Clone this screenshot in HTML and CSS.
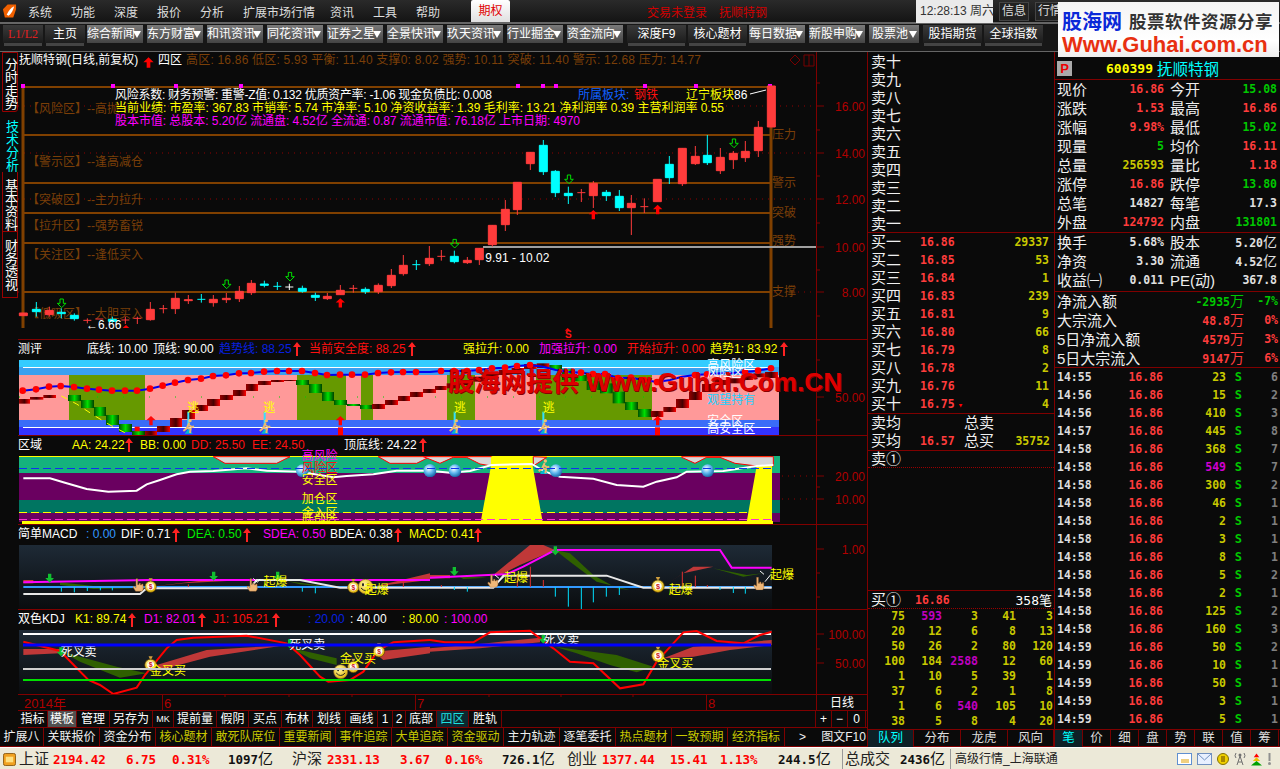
FILE: index.html
```html
<!DOCTYPE html>
<html lang="zh-CN">
<head>
<meta charset="utf-8">
<title>行情</title>
<link rel="stylesheet" href="styles.css">
</head>
<body>
<div class="app">
  <header class="menu">
    <svg class="logo" viewBox="0 0 16 16" width="15" height="16"><path fill="#f06000" d="M1 6 6 1h9v5l-3 9H3z"/><path fill="#fff" d="M5 12C7 8 9 5 13 3 12 7 10 11 7 13z"/></svg>
    <nav class="menu-items"><span>系统</span><span>功能</span><span>深度</span><span>报价</span><span>分析</span><span class="wide">扩展市场行情</span><span>资讯</span><span>工具</span><span>帮助</span></nav>
    <div class="qq">期权</div>
    <div class="login"><span>交易未登录</span><span>抚顺特钢</span></div>
    <div class="clock">12:28:13 周六</div>
    <div class="mbtn">信息</div>
    <div class="mbtn">行情</div>
  </header>
  <div class="toolbar">
    <div class="tb dark sm red">L1/L2</div><div class="tb dark sm">主页</div>
    <div class="tb gray">综合新闻<i></i></div><div class="tb gray">东方财富<i></i></div><div class="tb gray">和讯资讯<i></i></div><div class="tb gray">同花资讯<i></i></div><div class="tb gray">证券之星<i></i></div><div class="tb gray">全景快讯<i></i></div><div class="tb gray">玖天资讯<i></i></div><div class="tb gray">行业掘金<i></i></div><div class="tb gray">资金流向<i></i></div>
    <div class="tb dark">深度F9</div><div class="tb dark">核心题材</div>
    <div class="tb gray">每日数据<i></i></div><div class="tb gray">新股申购<i></i></div><div class="tb gray short">股票池<i></i></div>
    <div class="tb dark">股指期货</div><div class="tb dark">全球指数</div>
  </div>
  <main class="body">
    <div class="leftblock">
      <div class="toprow">
        <aside class="side">
          <div class="stab t1">分时走势</div><div class="stab t2">技术分析</div><div class="stab t3">基本资料</div><div class="stab t3 t4">财务透视</div>
        </aside>
        <section class="center">
          <!-- main chart -->
          <div class="pane">
            <svg class="chart" width="849" height="287" viewBox="18 52 849 287">
              <defs>
                <symbol id="ga" viewBox="0 0 30 30"><path d="M10 2h10v13h8L15 28 2 15h8z" fill="none" stroke="#00e000" stroke-width="3"/></symbol>
                <symbol id="ra" viewBox="0 0 30 30"><path d="M15 1 29 14H20V29H10V14H1z" fill="#f00"/></symbol>
                <symbol id="gd" viewBox="0 0 30 30"><path d="M10 1h10v13h8L15 28 2 14h8z" fill="#10c030"/></symbol>
                <symbol id="ua" viewBox="0 0 8 14"><path d="M4 0 0 5h3v9h2V5h3z" fill="#f22"/></symbol>
                <radialGradient id="ballg" cx=".4" cy=".35" r=".7"><stop offset="0" stop-color="#fff"/><stop offset=".5" stop-color="#60b8f0"/><stop offset="1" stop-color="#1060a0"/></radialGradient>
                <radialGradient id="yel" cx=".4" cy=".35" r=".7"><stop offset="0" stop-color="#fff8a0"/><stop offset="1" stop-color="#e0b000"/></radialGradient>
                <symbol id="ball" viewBox="0 0 40 40"><circle cx="20" cy="20" r="19" fill="url(#ballg)"/></symbol>
                <symbol id="bag" viewBox="0 0 40 44"><path d="M14 1h12l-4 8h-4z" fill="#d0a040"/><circle cx="20" cy="26" r="17" fill="url(#yel)" stroke="#604000" stroke-width="2"/><circle cx="20" cy="26" r="10" fill="#fff"/><text class="bagt" x="20" y="33" text-anchor="middle">$</text></symbol>
                <symbol id="smile" viewBox="0 0 48 48"><circle cx="24" cy="24" r="22" fill="url(#yel)" stroke="#806030" stroke-width="2"/><ellipse cx="16" cy="18" rx="3" ry="5" fill="#222"/><ellipse cx="32" cy="18" rx="3" ry="5" fill="#222"/><path d="M10 28Q24 44 38 28" fill="none" stroke="#222" stroke-width="3"/></symbol>
                <symbol id="hand" viewBox="0 0 36 40"><path d="M12 1h5v18h4v-4h4v5h4v-3h4l1 15-4 7H11L3 26l3-3 6 5z" fill="#f0b878" stroke="#a06830" stroke-width="1.5"/></symbol>
                <symbol id="run" viewBox="0 0 40 48"><path d="M8 46 20 30 32 46z" fill="#00b8d8"/><circle cx="24" cy="7" r="5" fill="#f0c070"/><path d="M22 13 14 30 4 38M20 20 30 26 36 24M15 28 26 32 24 44" fill="none" stroke="#e8b870" stroke-width="6"/></symbol>
                <linearGradient id="rb"><stop offset="0" stop-color="#900"/><stop offset=".5" stop-color="#400"/><stop offset="1" stop-color="#f00"/></linearGradient>
                <linearGradient id="gb"><stop offset="0" stop-color="#005000"/><stop offset=".5" stop-color="#00e000"/><stop offset="1" stop-color="#004000"/></linearGradient>
                <linearGradient id="darkb" x1="0" y1="0" x2="0" y2="1"><stop offset="0" stop-color="#1e2a36"/><stop offset="1" stop-color="#0a0c0e"/></linearGradient>
              </defs>
              <text class="w" x="19" y="64">抚顺特钢(日线,前复权)</text>
              <use href="#ra" x="143" y="56" width="11" height="13"/>
              <text class="w" x="158" y="64">四区</text>
              <text class="brn" x="186" y="64" textLength="515">高区: 16.86 低区: 5.93 平衡: 11.40 支撑0: 8.02 强势: 10.11 突破: 11.40 警示: 12.68 压力: 14.77</text>
              <path d="M795 55l5 5-5 5-5-5zM804 55h10v11h-10zM809 55v11" fill="none" stroke="#700"/>
              <path class="dots" d="M18 106H816M18 153H816M18 199H816M18 292H816"/>
              <path class="brline" d="M23 87H771M23 135H771M23 183H771M23 213H771M23 243H771M23 292H771"/>
              <path class="brwide" d="M23 87V328M771 87V328"/>
              <g fill="#f0f" ><rect x="21" y="84" width="4" height="4"/><rect x="111" y="84" width="4" height="4"/><rect x="174" y="84" width="4" height="4"/><rect x="239" y="84" width="4" height="4"/><rect x="516" y="84" width="4" height="4"/><rect x="541" y="84" width="4" height="4"/><rect x="554" y="84" width="4" height="4"/><rect x="643" y="84" width="4" height="4"/><rect x="694" y="84" width="4" height="4"/><rect x="768" y="84" width="4" height="4"/></g>
              <g class="brn">
                <text x="27" y="113">【风险区】--高抛</text>
                <text x="27" y="166">【警示区】--逢高减仓</text>
                <text x="27" y="204">【突破区】--主力拉升</text>
                <text x="27" y="230">【拉升区】--强势畜锐</text>
                <text x="27" y="259">【关注区】--逢低买入</text>
                <text x="27" y="318">【低吸区】--大胆买入</text>
                <text x="772" y="139">压力</text><text x="772" y="187">警示</text><text x="772" y="217">突破</text><text x="772" y="245">强势</text><text x="772" y="296">支撑</text>
              </g>
              <path d="M483 247H816" stroke="#a0a0a0" stroke-width="2"/>
              <g transform="translate(0 130) scale(.33333)">
                <path class="cr" d="M58 549h24v8h-24zM136 541h24v13h-24zM148 530V560M250 571h24M262 565V580M286 567h24M364 570h24M376 560V582M400 565h24M412 560V582M439 538h24v31h-24zM451 516V572M478 536h24M490 525V550M514 505h24v31h-24zM526 488V552M553 509h24v3h-24zM565 495V522M628 508h24v10h-24zM640 495V530M667 505h24v4h-24zM679 489V519M706 484h24v22h-24zM718 468V516M742 460h24v28h-24zM754 450V495M970 499h24v7h-24zM982 489V510M1009 481h24v13h-24zM1021 465V495M1048 475h24M1060 465V488M1123 466h24v19h-24zM1135 460V492M1162 436h24v31h-24zM1174 417V474M1198 406h24v25h-24zM1210 375V437M1276 385h24v16h-24zM1288 348V408"/>
                <path class="cc" d="M97 538h24v7h-24zM109 516V560M172 547h24v4h-24zM184 535V565M211 556h24v10h-24zM223 550V572M325 568h24v6h-24zM337 560V578M592 508h24M604 492V518M781 462h24v4h-24zM793 452V472M820 469h24M832 456V480M895 475h24v9h-24zM907 467V488M934 496h24v6h-24zM946 488V513M1084 478h24v7h-24zM1096 472V492M1237 404h24M1249 390V420"/>
                <path class="cw" d="M856 471h24M868 461V480"/>
                <use href="#ga" x="170" y="504" width="30" height="32"/><use href="#ga" x="665" y="447" width="30" height="32"/><use href="#ga" x="855" y="424" width="30" height="32"/>
                <use href="#ra" x="1006" y="503" width="30" height="31"/>
                <path d="M368 594 378 585 388 594z" fill="#f00"/>
                <text class="zt w" x="258" y="596">←6.66</text>
              </g>
              <g transform="translate(430 130) scale(.33333)">
                <path class="cr" d="M22 379h24M34 360V392M100 391h24v7h-24zM112 381V402M136 355h24v34h-24zM148 354V405M175 286h24v58h-24zM187 285V350M214 238h24v46h-24zM226 210V303M250 157h24v82h-24zM262 156V255M289 67h24v34h-24zM301 66V120M442 188h24M454 177V216M478 160h24v37h-24zM490 153V234M592 220h24v13h-24zM604 195V315M631 230h24M643 205V249M670 148h24v67h-24zM745 55h24v106h-24zM757 54V168M784 79h24v22h-24zM796 48V105M859 82h24v40h-24zM871 54V132M898 70h24v19h-24zM910 63V117M934 64h24v19h-24zM946 33V96M973 -8h24v70h-24zM985 -27V81M1012 -132h24v123h-24z"/>
                <path class="cc" d="M61 379h24v16h-24zM73 362V400M328 46h24v79h-24zM340 30V135M364 124h24v64h-24zM376 120V201M403 190h24v7h-24zM415 170V222M517 187h24v10h-24zM529 180V213M556 199h24v34h-24zM568 180V243M706 103h24v40h-24zM718 78V162M820 76h24v22h-24zM832 15V105"/>
                <use href="#ga" x="59" y="325" width="30" height="32"/><use href="#ga" x="402" y="132" width="30" height="32"/><use href="#ga" x="897" y="24" width="30" height="32"/>
                <use href="#ra" x="475" y="238" width="30" height="32"/><use href="#ra" x="668" y="222" width="30" height="33"/>
                <path d="M404 602 413 594 422 602z" fill="#f00"/>
                <text class="zt r s-mark" x="405" y="624">S</text>
                <text class="zt w" x="166" y="396">9.91 - 10.02</text>
              </g>
              <text class="w" x="115" y="99" textLength="377">风险系数: 财务预警: 重警-Z值: 0.132 优质资产率: -1.06 现金负债比: 0.008</text>
              <text class="y" x="115" y="112" textLength="609">当前业绩: 市盈率: 367.83 市销率: 5.74 市净率: 5.10 净资收益率: 1.39 毛利率: 13.21 净利润率 0.39 主营利润率 0.55</text>
              <text class="m" x="115" y="125" textLength="465">股本市值: 总股本: 5.20亿 流通盘: 4.52亿 全流通: 0.87 流通市值: 76.18亿 上市日期: 4970</text>
              <text class="bl2" x="578" y="99">所属板块:</text><text class="r" x="634" y="99">钢铁</text><text class="y" x="686" y="99">辽宁板块</text><text class="w" x="734" y="99">86</text>
              <path d="M750 94 766 90" stroke="#fff"/>
              <path class="red-line" d="M816.5 52V339"/>
              <path class="red-line" d="M816 106h8M816 153h8M816 199h8M816 247h8M816 292h8M816 83h4M816 130h4M816 176h4M816 223h4M816 270h4M816 316h4"/>
              <g class="ax"><text x="865" y="111">16.00</text><text x="865" y="158">14.00</text><text x="865" y="204">12.00</text><text x="865" y="252">10.00</text><text x="865" y="297">8.00</text></g>
            </svg>
          </div>
          <!-- 测评 -->
          <div class="pane">
            <svg class="chart" width="849" height="95" viewBox="18 340 849 95">
              <text class="w" x="18" y="353">测评</text>
              <text class="w" x="87" y="353">底线: 10.00</text><text class="w" x="153" y="353">顶线: 90.00</text>
              <text class="bl" x="219" y="353">趋势线: 88.25</text><use href="#ua" x="293" y="342" width="8" height="14"/>
              <text class="r" x="309" y="353">当前安全度: 88.25</text><use href="#ua" x="408" y="342" width="8" height="14"/>
              <text class="y" x="463" y="353">强拉升: 0.00</text><text class="m" x="539" y="353">加强拉升: 0.00</text><text class="r" x="627" y="353">开始拉升: 0.00</text><text class="y" x="710" y="353">趋势1: 83.92</text><use href="#ua" x="780" y="342" width="8" height="14"/>
              <rect x="19" y="360" width="760" height="7" fill="#33ccff"/><rect x="19" y="367" width="760" height="8" fill="#3aa0f0"/>
              <rect x="19" y="375" width="760" height="45" fill="#ff9999"/><rect x="19" y="420" width="760" height="7" fill="#3a6cf8"/><rect x="19" y="427" width="760" height="9" fill="#3333ff"/>
              <g fill="#669900"><rect x="69" y="375" width="76" height="45"/><rect x="297" y="375" width="49" height="45"/><rect x="361" y="375" width="12" height="45"/><rect x="447" y="375" width="28" height="45"/><rect x="536" y="375" width="116" height="45"/></g>
              <path d="M23 367.5H771M23 427.5H771" stroke="#fff"/>
              <path d="M19 397H660" stroke="#00d000" stroke-dasharray="1 25"/>
              <g transform="translate(0 340) scale(.33333)">
                <g fill="url(#rb)"><rect x="57" y="177" width="33" height="14"/><rect x="90" y="171" width="40" height="8"/><rect x="130" y="165" width="38" height="9"/><rect x="435" y="273" width="36" height="15"/><rect x="471" y="258" width="39" height="18"/><rect x="510" y="234" width="36" height="27"/><rect x="546" y="210" width="39" height="27"/><rect x="585" y="195" width="39" height="18"/><rect x="621" y="177" width="39" height="21"/><rect x="660" y="165" width="39" height="15"/><rect x="699" y="150" width="39" height="18"/><rect x="738" y="132" width="36" height="21"/><rect x="774" y="123" width="39" height="12"/><rect x="813" y="120" width="39" height="6"/><rect x="852" y="120" width="39" height="3"/><rect x="1116" y="192" width="39" height="15"/><rect x="1155" y="180" width="39" height="15"/><rect x="1194" y="168" width="36" height="15"/><rect x="1230" y="156" width="39" height="15"/><rect x="1269" y="147" width="39" height="12"/></g>
                <g fill="url(#gb)"><rect x="204" y="165" width="39" height="18"/><rect x="243" y="180" width="39" height="24"/><rect x="282" y="201" width="36" height="27"/><rect x="318" y="225" width="39" height="30"/><rect x="357" y="252" width="39" height="24"/><rect x="396" y="273" width="39" height="15"/><rect x="888" y="120" width="39" height="15"/><rect x="927" y="132" width="39" height="27"/><rect x="966" y="156" width="36" height="27"/><rect x="1002" y="180" width="39" height="15"/><rect x="1041" y="192" width="39" height="6"/><rect x="1080" y="195" width="36" height="12"/></g>
                <path d="M184 168 230 192 280 225 330 255 388 285" fill="none" stroke="#ff0" stroke-width="3" stroke-dasharray="20 20"/>
                <polyline fill="none" stroke="#0000f0" stroke-width="6" points="68,152 108,148 147,140 182,138 222,141 261,146 297,149 336,152 375,152 411,152 450,146 488,137 525,128 564,120 603,116 639,108 678,106 717,100 753,99 792,95 831,93 867,93 906,93 945,99 981,105 1020,104 1056,104 1095,104 1134,99 1173,97 1209,96 1248,96 1290,96"/>
                <g fill="#f00"><circle cx="68" cy="152" r="10"/><circle cx="108" cy="148" r="10"/><circle cx="147" cy="140" r="10"/><circle cx="182" cy="138" r="10"/><circle cx="222" cy="141" r="10"/><circle cx="261" cy="146" r="10"/><circle cx="297" cy="149" r="10"/><circle cx="336" cy="152" r="10"/><circle cx="375" cy="152" r="10"/><circle cx="411" cy="152" r="10"/><circle cx="450" cy="146" r="10"/><circle cx="488" cy="137" r="10"/><circle cx="525" cy="128" r="10"/><circle cx="564" cy="120" r="10"/><circle cx="603" cy="116" r="10"/><circle cx="639" cy="108" r="10"/><circle cx="678" cy="106" r="10"/><circle cx="717" cy="100" r="10"/><circle cx="753" cy="99" r="10"/><circle cx="792" cy="95" r="10"/><circle cx="831" cy="93" r="10"/><circle cx="867" cy="93" r="10"/><circle cx="906" cy="93" r="10"/><circle cx="945" cy="99" r="10"/><circle cx="981" cy="105" r="10"/><circle cx="1020" cy="104" r="10"/><circle cx="1056" cy="104" r="10"/><circle cx="1095" cy="104" r="10"/><circle cx="1134" cy="99" r="10"/><circle cx="1173" cy="97" r="10"/><circle cx="1209" cy="96" r="10"/><circle cx="1248" cy="96" r="10"/></g>
                <use href="#ra" x="438" y="224" width="30" height="36" opacity=".95"/><use href="#ra" x="1006" y="224" width="30" height="36"/>
                <rect x="1014" y="262" width="15" height="26" fill="#f00"/><rect x="404" y="260" width="15" height="14" fill="#f00"/>
                <rect x="562" y="215" width="6" height="40" fill="#33e0ff"/><rect x="791" y="215" width="6" height="40" fill="#33e0ff"/>
                <use href="#run" x="546" y="234" width="40" height="50"/><use href="#run" x="775" y="234" width="40" height="50"/>
                <text class="zt y" x="562" y="216">逃</text><text class="zt y" x="790" y="216">逃</text>
              </g>
              <g transform="translate(430 340) scale(.33333)">
                <g fill="url(#rb)"><rect x="15" y="138" width="35" height="12"/><rect x="50" y="130" width="40" height="15"/><rect x="90" y="120" width="40" height="15"/><rect x="130" y="110" width="38" height="15"/><rect x="168" y="100" width="38" height="15"/><rect x="206" y="90" width="39" height="15"/><rect x="245" y="84" width="37" height="16"/><rect x="282" y="72" width="38" height="15"/><rect x="320" y="70" width="38" height="14"/><rect x="663" y="213" width="37" height="18"/><rect x="700" y="201" width="38" height="15"/><rect x="738" y="177" width="39" height="27"/><rect x="777" y="156" width="39" height="24"/><rect x="816" y="132" width="39" height="24"/><rect x="855" y="120" width="40" height="15"/><rect x="895" y="115" width="40" height="15"/><rect x="935" y="105" width="35" height="15"/><rect x="970" y="100" width="35" height="12"/><rect x="1005" y="96" width="39" height="18"/></g>
                <g fill="url(#gb)"><rect x="358" y="75" width="38" height="15"/><rect x="396" y="88" width="39" height="32"/><rect x="435" y="105" width="35" height="18"/><rect x="470" y="123" width="40" height="27"/><rect x="510" y="130" width="38" height="30"/><rect x="548" y="155" width="37" height="35"/><rect x="585" y="186" width="39" height="24"/><rect x="624" y="207" width="39" height="24"/></g>
                <polyline fill="none" stroke="#0000f0" stroke-width="6" points="0,96 33,93 72,93 111,93 147,90 186,85 225,83 261,78 300,75 339,80 378,90 414,95 453,98 489,102 525,102 564,114 603,113 642,120 681,126 720,120 756,110 795,105 831,103 870,100 906,99 945,96 984,92 1023,85"/>
                <g fill="#f00"><circle cx="33" cy="93" r="10"/><circle cx="72" cy="93" r="10"/><circle cx="111" cy="93" r="10"/><circle cx="147" cy="90" r="10"/><circle cx="186" cy="85" r="10"/><circle cx="225" cy="83" r="10"/><circle cx="261" cy="78" r="10"/><circle cx="300" cy="75" r="10"/><circle cx="453" cy="98" r="10"/><circle cx="489" cy="102" r="10"/><circle cx="525" cy="102" r="10"/><circle cx="564" cy="114" r="10"/><circle cx="603" cy="113" r="10"/><circle cx="642" cy="120" r="10"/><circle cx="681" cy="126" r="10"/><circle cx="795" cy="105" r="10"/><circle cx="831" cy="103" r="10"/><circle cx="945" cy="96" r="10"/><circle cx="984" cy="92" r="10"/><circle cx="1023" cy="85" r="10"/></g>
                <use href="#ra" x="668" y="224" width="30" height="36"/><rect x="675" y="262" width="15" height="26" fill="#f00"/>
                <rect x="71" y="215" width="6" height="40" fill="#33e0ff"/><rect x="337" y="215" width="6" height="40" fill="#33e0ff"/>
                <use href="#run" x="55" y="234" width="40" height="50"/><use href="#run" x="322" y="234" width="40" height="50"/>
                <text class="zt y" x="72" y="216">逃</text><text class="zt y" x="338" y="216">逃</text>
                <text class="zt w" x="832" y="88">高风险区</text><text class="zt w" x="832" y="112">风险区</text><text class="zt cy" x="832" y="192">观望持有</text><text class="zt w" x="832" y="256">安全区</text><text class="zt w" x="832" y="278">高安全区</text>
              </g>
              <path class="red-line" d="M816.5 340V435M816 397h8M816 360h4M816 420h4"/>
              <g class="ax"><text x="865" y="402">50.00</text></g>
            </svg>
          </div>
          <!-- 区域 -->
          <div class="pane">
            <svg class="chart" width="849" height="88" viewBox="18 436 849 88">
              <text class="w" x="18" y="449">区域</text>
              <text class="y" x="72" y="449">AA: 24.22</text><use href="#ua" x="125" y="438" width="8" height="14"/>
              <text class="y" x="140" y="449">BB: 0.00</text><text class="r" x="191" y="449">DD: 25.50</text><text class="r" x="252" y="449">EE: 24.50</text>
              <text class="w" x="344" y="449">顶底线: 24.22</text><use href="#ua" x="419" y="438" width="8" height="14"/>
              <rect x="19" y="456" width="761" height="17" fill="#14b37d"/><rect x="19" y="473" width="761" height="27" fill="#6a0060"/><rect x="19" y="500" width="761" height="13" fill="#007561"/><rect x="19" y="513" width="761" height="9" fill="#6a0060"/>
              <path d="M22 522.5H773" stroke="#ff0" stroke-width="3"/>
              <path d="M19 456.5H771" stroke="#ff0"/>
              <g transform="translate(0 340) scale(.33333)">
                <path d="M640 350 675 370H830L870 350zM1135 350 1170 370H1250L1290 350z" fill="#d8d8d8" stroke="#f00" stroke-width="3"/>
                <polyline fill="none" stroke="#fff" stroke-width="6" points="70,415 150,415 195,428 260,447 325,455 410,452 440,433 480,420 530,403 570,395 640,393 740,385 800,392 900,395 1000,412 1040,408 1120,403 1190,392 1290,392"/>
                <use href="#ball" x="887" y="372" width="40" height="40"/><use href="#ball" x="1270" y="372" width="40" height="40"/>
                <text class="zt m" x="905" y="360">高风险</text><text class="zt r" x="905" y="395">风险区</text><text class="zt y" x="905" y="432">安全区</text><text class="zt y" x="905" y="490">加仓区</text><text class="zt y" x="905" y="530">金入区</text><text class="zt y" x="905" y="545">底部区</text>
              </g>
              <g transform="translate(430 340) scale(.33333)">
                <path d="M-20 350 30 370 70 352H110L150 372 185 378V350zM310 350V378L350 352zM755 352 795 370 830 352H870L915 370 980 378H1030V350H755z" fill="#d8d8d8" stroke="#f00" stroke-width="3"/>
                <path d="M183 350H308V378L338 546H152L183 378zM980 378 950 546H1026V378z" fill="#ff0"/>
                <polyline fill="none" stroke="#fff" stroke-width="6" points="0,392 60,398 120,393 185,375 305,372 345,395 390,410 490,416 560,435 640,440 680,425 740,412 770,395 880,393 980,378 1030,375"/>
                <use href="#ball" x="-20" y="372" width="40" height="40"/><use href="#ball" x="55" y="372" width="40" height="40"/><use href="#ball" x="358" y="372" width="40" height="40"/><use href="#ball" x="813" y="372" width="40" height="40"/>
                <use href="#run" x="322" y="356" width="40" height="48"/>
              </g>
              <path d="M19 468.5H775" stroke="#1030f0" stroke-dasharray="8 4"/>
              <path d="M19 512.5H772" stroke="#ff0" stroke-dasharray="8 4"/>
              <path d="M19 519.5H772" stroke="#ff30d0" stroke-dasharray="8 4"/>
              <path class="red-line" d="M816.5 436V524M816 476h8M816 499h8M816 487h4"/>
              <path class="dots" d="M782 476H816M782 499H816"/>
              <g class="ax"><text x="865" y="481">20.00</text><text x="865" y="504">10.00</text></g>
            </svg>
          </div>
          <!-- MACD -->
          <div class="pane">
            <svg class="chart" width="849" height="84" viewBox="18 525 849 84">
              <text class="w" x="18" y="538">简单MACD</text>
              <text class="sb" x="86" y="538">: 0.00</text><text class="w" x="121" y="538">DIF: 0.71</text><use href="#ua" x="172" y="528" width="8" height="14"/>
              <text class="g" x="187" y="538">DEA: 0.50</text><use href="#ua" x="243" y="528" width="8" height="14"/>
              <text class="m" x="263" y="538">SDEA: 0.50</text><text class="w" x="330" y="538">BDEA: 0.38</text><use href="#ua" x="394" y="528" width="8" height="14"/>
              <text class="y" x="409" y="538">MACD: 0.41</text><use href="#ua" x="474" y="528" width="8" height="14"/>
              <rect x="19" y="545" width="753" height="65" fill="url(#darkb)"/>
              <g transform="translate(0 525) scale(.33333)">
                <path d="M180 172 300 185 410 190 280 192 180 180zM860 168 1020 190 900 178z" fill="#2f6000"/>
                <path d="M450 185 620 165H740L550 175zM1120 185 1290 145V165L1160 180zM70 165H100V175H70z" fill="#c03838"/>
                <path d="M70 186H1290" stroke="#3399ff" stroke-width="6"/>
                <polyline fill="none" stroke="#f0f" stroke-width="6" points="70,172 450,165 1290,165"/>
                <polyline fill="none" stroke="#e8e8e8" stroke-width="6" points="70,207 420,207 440,190 750,190 770,165 900,165 1020,188 1290,188"/>
                <path d="M184 186V200M223 186V202M262 186V198M301 186V196M337 186V196M907 186V200M946 186V205" stroke="#00e0ff" stroke-width="3"/>
                <path d="M565 178V186M1210 168V186" stroke="#e03030" stroke-width="3"/>
                <use href="#gd" x="134" y="144" width="30" height="32"/><use href="#gd" x="626" y="138" width="30" height="32"/><use href="#gd" x="818" y="138" width="30" height="32"/>
                <use href="#hand" x="396" y="160" width="36" height="40"/><use href="#hand" x="738" y="160" width="36" height="40"/>
                <use href="#bag" x="432" y="158" width="40" height="46"/><use href="#bag" x="1040" y="160" width="40" height="46"/>
                <use href="#smile" x="1073" y="161" width="48" height="48"/>
                <path d="M760 160l12 12 8-10" fill="none" stroke="#fff" stroke-width="3"/>
                <text class="zt y" x="790" y="183">起爆</text><text class="zt y" x="1094" y="207">起爆</text>
              </g>
              <g transform="translate(430 525) scale(.33333)">
                <path d="M190 150 300 60H340L375 75 270 120 210 150zM705 180 790 125H850L760 145zM0 160H60V150H0z" fill="#c03838"/>
                <path d="M375 75 420 85 490 150 560 190 640 200 600 195 500 170 420 110zM850 130 950 150 1000 145 940 155zM85 153 170 158 100 162z" fill="#2f6000"/>
                <path d="M0 186H1025" stroke="#3399ff" stroke-width="6"/>
                <polyline fill="none" stroke="#f0f" stroke-width="6" points="0,158 175,150 230,148 280,125 375,75 870,75 905,128 1025,128"/>
                <polyline fill="none" stroke="#e8e8e8" stroke-width="6" points="0,188 190,188 220,152 530,152 640,188 1025,188"/>
                <path d="M376 186V215M415 186V245M454 186V252M490 186V232M529 186V215M568 186V210M112 186V200M73 186V195M870 186V195M910 186V204M946 186V206" stroke="#00e0ff" stroke-width="3"/>
                <path d="M301 125V186M262 150V186M340 165V186M796 152V186M757 140V186M34 180V186M832 180V186" stroke="#e03030" stroke-width="3"/>
                <use href="#gd" x="58" y="124" width="30" height="32"/><use href="#gd" x="361" y="62" width="30" height="32"/>
                <use href="#hand" x="170" y="148" width="36" height="40"/><use href="#hand" x="968" y="156" width="36" height="40"/>
                <use href="#bag" x="662" y="148" width="44" height="62"/>
                <path d="M195 150l12 10M205 170l18-16M990 138l12 10M1005 170l18-22" fill="none" stroke="#fff" stroke-width="3"/>
                <text class="zt y" x="222" y="170">起爆</text><text class="zt y" x="716" y="207">起爆</text><text class="zt y" x="1020" y="163">起爆</text>
              </g>
              <path class="red-line" d="M816.5 525V609M816 549h8M816 573h4M816 597h4"/>
              <g class="ax"><text x="865" y="554">1.00</text></g>
            </svg>
          </div>
          <!-- KDJ -->
          <div class="pane">
            <svg class="chart" width="849" height="84" viewBox="18 610 849 84">
              <text class="w" x="18" y="623">双色KDJ</text>
              <text class="y" x="75" y="623">K1: 89.74</text><use href="#ua" x="128" y="613" width="8" height="14"/>
              <text class="m" x="144" y="623">D1: 82.01</text><use href="#ua" x="198" y="613" width="8" height="14"/>
              <text class="r" x="213" y="623">J1: 105.21</text><use href="#ua" x="272" y="613" width="8" height="14"/>
              <text class="bl" x="308" y="623">: 20.00</text><text class="w" x="350" y="623">: 40.00</text><text class="y" x="402" y="623">: 80.00</text><text class="m" x="444" y="623">: 100.00</text>
              <rect x="19" y="630" width="753" height="65" fill="url(#darkb)"/>
              <path d="M23 634H771" stroke="#fff" stroke-width="2"/>
              <g transform="translate(0 525) scale(.33333)">
                <path d="M70 372H180V385L70 390zM470 420 620 375 860 360 630 395 480 435zM1120 380 1290 365V385L1150 405z" fill="#c03838"/>
                <path d="M185 380 350 425 440 445 360 458 240 410zM870 368 1010 400V420L930 400z" fill="#2f6000"/>
                <polyline fill="none" stroke="#f00" stroke-width="6" points="70,350 180,378 265,465 300,480 340,507 410,488 435,450 500,370 530,345 580,338 740,332 860,355 900,390 960,455 985,470 1050,465 1090,440 1135,375 1180,352 1290,345"/>
                <use href="#gd" x="168" y="366" width="30" height="30"/><use href="#gd" x="854" y="342" width="30" height="30"/>
                <use href="#bag" x="430" y="393" width="44" height="46"/><use href="#bag" x="1040" y="400" width="40" height="44"/><use href="#bag" x="1117" y="352" width="40" height="46"/>
                <use href="#smile" x="999" y="417" width="46" height="46"/>
                <text class="zt w" x="182" y="392">死叉卖</text><text class="zt w" x="868" y="373">死叉卖</text>
                <text class="zt y" x="450" y="449">金叉买</text><text class="zt y" x="1020" y="415">金叉买</text>
              </g>
              <g transform="translate(430 525) scale(.33333)">
                <path d="M0 370 170 355 330 338V352L150 370 0 380zM700 400 790 365 1025 345V360L900 375 790 395z" fill="#c03838"/>
                <path d="M375 365 560 390 670 425 620 442 540 420 440 385z" fill="#2f6000"/>
                <polyline fill="none" stroke="#f00" stroke-width="6" points="0,345 45,352 130,352 180,322 300,317 370,370 420,410 490,415 570,490 640,478 680,410 760,322 800,318 860,348 940,355 990,330 1025,320"/>
                <use href="#gd" x="325" y="328" width="30" height="30"/><use href="#bag" x="662" y="363" width="44" height="50"/>
                <text class="zt w" x="340" y="358">死叉卖</text><text class="zt y" x="682" y="429">金叉买</text>
              </g>
              <path d="M23 645H771" stroke="#0000ff" stroke-width="3"/>
              <path d="M23 669H771" stroke="#d0d0d0" stroke-width="2"/>
              <path d="M23 680H771" stroke="#00e000" stroke-width="2"/>
              <path class="red-line" d="M816.5 610V694M816 634h8M816 663h8M816 649h4"/>
              <g class="ax"><text x="865" y="639">100.00</text><text x="865" y="668">50.00</text></g>
            </svg>
          </div>
          <!-- 日期 -->
          <div class="pane date">
            <svg class="chart" width="849" height="15" viewBox="18 695 849 15">
              <text class="ax2" x="24" y="708">2014年</text><text class="ax2" x="164" y="708">6</text><text class="ax2" x="417" y="708">7</text><text class="ax2" x="708" y="708">8</text>
              <path class="red-line" d="M162.5 695V710M415.5 695V710M706.5 695V710M225 695v2M289 695v2M352 695v2M489 695v2M561 695v2M633 695v2M816.5 695V710"/>
              <text class="w" x="830" y="707">日线</text>
            </svg>
          </div>
          <div class="btns">
            <span>指标</span><span class="on">模板</span><span>管理</span><span>另存为</span><span class="tiny">MK</span><span>提前量</span><span>假阴</span><span>买点</span><span>布林</span><span>划线</span><span>画线</span><span>1</span><span>2</span><span>底部</span><span class="cy-on">四区</span><span>胜轨</span><span class="fill"></span><span>+</span><span>−</span><span>0</span>
          </div>
        </section>
      </div>
      <div class="tabs">
        <span>扩展八</span><span>关联报价</span><span>资金分布</span><span class="o">核心题材</span><span class="o">敢死队席位</span><span class="o">重要新闻</span><span class="o">事件追踪</span><span class="o">大单追踪</span><span class="o">资金驱动</span><span>主力轨迹</span><span>逐笔委托</span><span class="o">热点题材</span><span class="o">一致预期</span><span class="o">经济指标</span><span>&gt;</span><span>图文F10</span>
      </div>
    </div>
    <section class="book">
      <div class="sec s181">
        <div class="bk"><b>卖十</b></div><div class="bk"><b>卖九</b></div><div class="bk"><b>卖八</b></div><div class="bk"><b>卖七</b></div><div class="bk"><b>卖六</b></div><div class="bk"><b>卖五</b></div><div class="bk"><b>卖四</b></div><div class="bk"><b>卖三</b></div><div class="bk"><b>卖二</b></div><div class="bk"><b>卖一</b></div>
      </div>
      <div class="sec s181 nopad">
        <div class="bk"><b>买一</b><em>16.86</em><u>29337</u></div><div class="bk"><b>买二</b><em>16.85</em><u>53</u></div><div class="bk"><b>买三</b><em>16.84</em><u>1</u></div><div class="bk"><b>买四</b><em>16.83</em><u>239</u></div><div class="bk"><b>买五</b><em>16.81</em><u>9</u></div><div class="bk"><b>买六</b><em>16.80</em><u>66</u></div><div class="bk"><b>买七</b><em>16.79</em><u>8</u></div><div class="bk"><b>买八</b><em>16.78</em><u>2</u></div><div class="bk"><b>买九</b><em>16.76</em><u>11</u></div><div class="bk"><b>买十</b><em>16.75<small>▾</small></em><u>4</u></div>
      </div>
      <div class="sec s37">
        <div class="avg"><b>卖均</b><em></em><b>总卖</b><u></u></div>
        <div class="avg"><b>买均</b><em>16.57</em><b>总买</b><u>35752</u></div>
      </div>
      <div class="sec s140"><div class="qhead"><b>卖①</b></div></div>
      <div class="qhead buy"><b>买①</b><em>16.86</em><span>358笔</span></div>
      <div class="queue">
        <u>75</u><u class="mg">593</u><u>3</u><u>41</u><u>3</u>
        <u>20</u><u>12</u><u>6</u><u>8</u><u>13</u>
        <u>50</u><u>26</u><u>2</u><u>80</u><u>120</u>
        <u>100</u><u>184</u><u class="mg">2588</u><u>12</u><u>60</u>
        <u>1</u><u>10</u><u>5</u><u>39</u><u>1</u>
        <u>37</u><u>6</u><u>2</u><u>1</u><u>8</u>
        <u>1</u><u>6</u><u class="mg">540</u><u>105</u><u>10</u>
        <u>38</u><u>5</u><u>8</u><u>4</u><u>20</u>
      </div>
      <div class="btabs four"><span class="cur">队列</span><span>分布</span><span>龙虎</span><span>风向</span></div>
    </section>
    <section class="quote">
      <div class="qtitle"><span class="p">P</span><span class="code">600399</span><span class="nm">抚顺特钢</span></div>
      <div class="sec q8">
        <div class="qr"><b>现价</b><em>16.86</em><b>今开</b><i>15.08</i></div>
        <div class="qr"><b>涨跌</b><em>1.53</em><b>最高</b><em>16.86</em></div>
        <div class="qr"><b>涨幅</b><em>9.98%</em><b>最低</b><i>15.02</i></div>
        <div class="qr"><b>现量</b><i>5</i><b>均价</b><em>16.11</em></div>
        <div class="qr"><b>总量</b><u>256593</u><b>量比</b><em>1.18</em></div>
        <div class="qr"><b>涨停</b><em>16.86</em><b>跌停</b><i>13.80</i></div>
        <div class="qr"><b>总笔</b><s>14827</s><b>每笔</b><s>17.3</s></div>
        <div class="qr"><b>外盘</b><em>124792</em><b>内盘</b><i>131801</i></div>
      </div>
      <div class="sec q3">
        <div class="qr"><b>换手</b><s>5.68%</s><b>股本</b><s>5.20<span class="yi">亿</span></s></div>
        <div class="qr"><b>净资</b><s>3.30</s><b>流通</b><s>4.52<span class="yi">亿</span></s></div>
        <div class="qr"><b>收益㈠</b><s>0.011</s><b>PE(动)</b><s>367.8</s></div>
      </div>
      <div class="sec q4">
        <div class="fl"><b>净流入额</b><i>-2935<span class="yi">万</span></i><i>-7%</i></div>
        <div class="fl"><b>大宗流入</b><em>48.8<span class="yi">万</span></em><em>0%</em></div>
        <div class="fl"><b>5日净流入额</b><em>4579<span class="yi">万</span></em><em>3%</em></div>
        <div class="fl"><b>5日大宗流入</b><em>9147<span class="yi">万</span></em><em>6%</em></div>
      </div>
      <div class="ticks">
        <div class="tk"><s>14:55</s><em>16.86</em><u>23</u><i>S</i><tt>6</tt></div>
        <div class="tk"><s>14:56</s><em>16.86</em><u>15</u><i>S</i><tt>2</tt></div>
        <div class="tk"><s>14:56</s><em>16.86</em><u>410</u><i>S</i><tt>3</tt></div>
        <div class="tk"><s>14:57</s><em>16.86</em><u>445</u><i>S</i><tt>8</tt></div>
        <div class="tk"><s>14:58</s><em>16.86</em><u>368</u><i>S</i><tt>7</tt></div>
        <div class="tk"><s>14:58</s><em>16.86</em><u class="mg">549</u><i>S</i><tt>7</tt></div>
        <div class="tk"><s>14:58</s><em>16.86</em><u>300</u><i>S</i><tt>2</tt></div>
        <div class="tk"><s>14:58</s><em>16.86</em><u>46</u><i>S</i><tt>1</tt></div>
        <div class="tk"><s>14:58</s><em>16.86</em><u>2</u><i>S</i><tt>1</tt></div>
        <div class="tk"><s>14:58</s><em>16.86</em><u>3</u><i>S</i><tt>1</tt></div>
        <div class="tk"><s>14:58</s><em>16.86</em><u>8</u><i>S</i><tt>1</tt></div>
        <div class="tk"><s>14:58</s><em>16.86</em><u>5</u><i>S</i><tt>2</tt></div>
        <div class="tk"><s>14:58</s><em>16.86</em><u>2</u><i>S</i><tt>1</tt></div>
        <div class="tk"><s>14:58</s><em>16.86</em><u>125</u><i>S</i><tt>2</tt></div>
        <div class="tk"><s>14:58</s><em>16.86</em><u>160</u><i>S</i><tt>3</tt></div>
        <div class="tk"><s>14:59</s><em>16.86</em><u>50</u><i>S</i><tt>2</tt></div>
        <div class="tk"><s>14:59</s><em>16.86</em><u>10</u><i>S</i><tt>1</tt></div>
        <div class="tk"><s>14:59</s><em>16.86</em><u>50</u><i>S</i><tt>1</tt></div>
        <div class="tk"><s>14:59</s><em>16.86</em><u>3</u><i>S</i><tt>1</tt></div>
        <div class="tk"><s>14:59</s><em>16.86</em><u>5</u><i>S</i><tt>1</tt></div>
      </div>
      <div class="btabs eight"><span class="cur">笔</span><span>价</span><span>细</span><span>盘</span><span>势</span><span>联</span><span>值</span><span>筹</span></div>
    </section>
  </main>
  <footer class="status">
    <svg class="sicon" viewBox="0 0 14 14" width="13" height="13"><rect x=".5" y=".5" width="13" height="13" rx="2" fill="#f0a020" stroke="#8a5a10"/><rect x="3" y="4" width="8" height="6" fill="#ffe080"/></svg>
    <span class="l">上证</span><b>2194.42</b><b>6.75</b><b>0.31%</b><strong>1097<span class="yi2">亿</span></strong>
    <span class="l">沪深</span><b>2331.13</b><b>3.67</b><b>0.16%</b><strong>726.1<span class="yi2">亿</span></strong>
    <span class="l">创业</span><b>1377.44</b><b>15.41</b><b>1.13%</b><strong>244.5<span class="yi2">亿</span></strong>
    <span class="sp"></span><span class="l">总成交</span><strong>2436<span class="yi2">亿</span></strong><span class="sp"></span><span class="srv">高级行情_上海联通</span>
    <div class="tray">
      <svg viewBox="0 0 15 12" width="15" height="12"><rect x=".5" y=".5" width="14" height="11" fill="#fff" stroke="#6090d0"/><path d="M4 7h8M4 9h8" stroke="#e0a000"/></svg>
      <svg viewBox="0 0 15 12" width="15" height="12"><rect x=".5" y=".5" width="14" height="11" fill="#e8f0ff" stroke="#7090c0"/><path d="M1 1 7.5 7 14 1" fill="none" stroke="#7090c0"/></svg>
      <svg viewBox="0 0 12 12" width="12" height="12"><circle cx="6" cy="6" r="5.5" fill="#f0d000" stroke="#807000"/><path d="M4 4h4M4 6h4M4 8h4" stroke="#604000"/></svg>
      <svg viewBox="0 0 12 14" width="12" height="14"><path d="M6 4 3 13M6 4 9 13M4 10h4M2 1Q0 4 2 6M10 1Q12 4 10 6" fill="none" stroke="#707070"/><circle cx="6" cy="3" r="1.5" fill="#707070"/></svg>
      <svg viewBox="0 0 12 13" width="11" height="13"><path d="M6 0 9 4H3z" fill="#f00"/><path d="M6 4 10 8H2z" fill="#f0c000"/><path d="M6 8 12 13H0z" fill="#00a000"/></svg>
      <svg viewBox="0 0 5 12" width="5" height="12"><path d="M2.5 0v8" stroke="#909090" stroke-width="2"/><circle cx="2.5" cy="10.500" r="1.500" fill="#909090"/></svg>
    </div>
  </footer>
  <div class="wm">
    <div class="wm1"><span class="wmb">股海网</span><span class="wmk">股票软件资源分享</span></div>
    <div class="wm2">Www.Guhai.com.cn</div>
  </div>
  <div class="redmark">股海网提供 Www.Guhai.Com.CN</div>
</div>
</body>
</html>
```

FILE: styles.css
```css
*{box-sizing:border-box;margin:0;padding:0}
html,body{width:1280px;height:769px;overflow:hidden;background:#0a0a0a}
body{font:12px "Liberation Sans","Noto Sans CJK SC",sans-serif;color:#fff}
.app{position:relative;width:1280px;height:769px;display:flex;flex-direction:column}
b,em,u,i,s,tt,strong,small{font-weight:normal;font-style:normal;text-decoration:none}

/* menu */
.menu{height:22px;display:flex;align-items:center;background:linear-gradient(#2a2a2a,#141414);position:relative;flex:none}
.logo{margin-left:2px;flex:none}
.menu-items{display:flex;margin-left:11px;color:#ddd;font-size:12px}
.menu-items span{width:43px}
.menu-items .wide{width:87px}
.qq{margin-left:12px;width:39px;height:22px;background:linear-gradient(#fff,#e0e0e0);color:#e00000;text-align:center;line-height:22px;border-radius:2px 2px 0 0}
.login{margin-left:137px;color:#d00000;display:flex;gap:12px;width:269px}
.clock{width:77px;height:23px;background:#eaeaea;color:#333;line-height:23px;padding-left:4px;white-space:nowrap}
.mbtn{margin-left:6px;width:30px;height:19px;border:1px solid #444;background:#222;text-align:center;line-height:17px;color:#ddd}

/* toolbar */
.toolbar{height:30px;flex:none;background:#171717;border-top:2px solid #666;border-bottom:1px solid #666;padding-left:3px;display:flex;gap:2px;white-space:nowrap;overflow:hidden;padding-top:1px}
.tb{width:56px;height:18px;line-height:18px;text-align:center;color:#fff;position:relative;flex:none}
.tb.gray{background:linear-gradient(#7a7a7a,#444);margin-right:2px;padding-right:8px}
.tb.gray i{position:absolute;right:2px;top:6px;width:0;height:0;border:4px solid transparent;border-top:7px solid #fff;border-bottom:0}
.tb.short{width:50px}
.tb.dark{background:linear-gradient(#3a3a3a,#1c1c1c);width:59px;border-bottom:0;box-shadow:0 4px 0 -1px #444}
.tb.sm{width:40px}
.tb.red{color:#e02020;font-family:"Liberation Serif",serif;margin-right:0}

/* layout */
.body{flex:1;display:flex;height:695px;min-height:0}
.leftblock{width:867px;display:flex;flex-direction:column;flex:none}
.toprow{display:flex;height:676px}
.side{width:18px;flex:none;display:flex;flex-direction:column;background:#0a0a0a;padding-left:2px}
.stab{writing-mode:vertical-rl;text-orientation:upright;font-size:13px;line-height:14px;width:16px;height:60px;padding-top:6px;flex:none;white-space:nowrap}
.t1{border:1px solid #900;border-top-color:#900;padding-top:5px;border-radius:0 0 3px 0}
.t2{color:#00ffff;padding-top:8px}
.t3{border-right:1px solid #900;border-left:1px solid #900;border-bottom:1px solid #900;padding-top:7px;height:60px}
.t4{height:66px}
.center{width:849px;display:flex;flex-direction:column;flex:none}
.pane{border-bottom:1px solid #800000;flex:none}
.pane.date{height:16px}
.chart{display:block}
.chart text{font:12px "Liberation Sans","Noto Sans CJK SC",sans-serif;white-space:pre}
.chart .zt{font-size:36px}
.chart .s-mark{font-weight:bold;font-size:30px}
.w{fill:#fff}.y{fill:#ffff00}.m{fill:#ff00ff}.r{fill:#ff1010}.bl{fill:#0820e0}.bl2{fill:#1060ff}.cy{fill:#20d0ff}.sb{fill:#3399ff}.g{fill:#00f000}
.brn,.brn text{fill:#7a3f08}
.ax text{fill:#b00000;text-anchor:end}
.chart .ax2{fill:#b00000;font-size:13px}
.chart .bagt{font:bold 20px "Liberation Sans",sans-serif;fill:#d02020}
.dots{stroke:#900000;stroke-dasharray:1 5;fill:none}
.brline{stroke:#804000;stroke-width:2;fill:none}
.brwide{stroke:#804000;stroke-width:3;fill:none}
.cr{stroke:#ff3b3b;stroke-width:3;fill:#ff3b3b}
.cc{stroke:#00ffff;stroke-width:3;fill:#00ffff}
.cw{stroke:#fff;stroke-width:3}
.red-line{stroke:#800000;fill:none}

/* buttons */
.btns{height:17px;display:grid;grid-template-columns:30px 29px 33px 43px 21px 43px 32px 33px 31px 33px 32px 15px 13px 31px 32px 33px 314px 16px 16px 18px;border-bottom:1px solid #800000;line-height:16px;text-align:center;flex:none}
.btns span{border-right:1px solid #700;height:16px}
.btns .on{background:#505050}
.btns .cy-on{color:#20e0e0;background:#0d2830}
.btns .tiny{font-size:9px}
.tabs{height:19px;display:grid;grid-template-columns:44px 56px 56px 56px 68px 56px 56px 56px 56px 56px 56px 56px 56px 57px 35px 47px;border-bottom:1px solid #800000;line-height:18px;text-align:center;flex:none}
.tabs span{border-right:1px solid #800000;color:#f0f0f0;height:18px}
.tabs .o{color:#c8c800}
.tabs span:nth-child(15),.tabs span:nth-child(16){border:0}

/* book */
.book{width:188px;flex:none;border-left:1px solid #800000;border-right:1px solid #800000;display:flex;flex-direction:column}
.sec{border-bottom:1px solid #800000;flex:none}
.s181{height:181px;padding-top:1px}
.s181.nopad{padding-top:0}
.bk{height:18px;display:grid;grid-template-columns:49px 50px 1fr;padding:0 5px 0 3px;line-height:18px;font-size:15px}
.book b{font-size:15px;color:#f0f0f0}
em,.quote s,.tk u,.book u{font:bold 11.5px/18px "DejaVu Sans Mono","Liberation Mono","Noto Sans CJK SC",monospace}
.book em{color:#ff3c3c}
.book u{color:#c8c800;text-align:right}
.book small{color:#f00;font-size:9px;position:relative;left:3px}
.s37{height:37px}
.avg{height:18px;display:grid;grid-template-columns:49px 44px 30px 1fr;padding:0 4px 0 3px;line-height:18px}
.s140{height:140px}
.qhead{height:17px;line-height:16px;padding-left:3px;border-bottom:1px dotted #900;display:flex;align-items:center}
.qhead.buy{height:18px;flex:none}
.qhead.buy em{margin-left:14px}
.qhead.buy span{margin-left:auto;font:13px "DejaVu Sans Mono","Noto Sans CJK SC",monospace;padding-right:2px}
.queue{display:grid;grid-template-columns:37px 37px 36px 38px 37px;grid-auto-rows:15px;flex:none}
.queue u{line-height:15px}
.book u.mg{color:#c000c0}
.btabs{display:grid;height:18px;margin-top:auto;line-height:17px;text-align:center;font-size:12.500px;border-top:1px solid #800000;border-bottom:1px solid #800000;flex:none}
.btabs.four{grid-template-columns:46px 47px 47px 46px}
.btabs.eight{grid-template-columns:repeat(8,28px)}
.btabs span{border-right:1px solid #700;color:#ddd}
.btabs .cur{color:#00ffff;background:#0d2026}

/* quote */
.quote{width:225px;flex:none;display:flex;flex-direction:column}
.qtitle{height:28px;border-bottom:1px solid #800000;display:flex;align-items:center;flex:none;padding-top:5px;position:relative}
.p{margin-left:2px;width:15px;height:15px;background:#aaa;color:#e00;font:bold 13px/15px "Liberation Sans",sans-serif;text-align:center}
.code{margin-left:34px;color:#ff0;font:bold 13px "DejaVu Sans Mono",monospace}
.nm{margin-left:4px;color:#00ffff;font-size:15.500px}
.q8{height:153px}
.q3{height:59px}
.q4{height:76px}
.qr{height:19px;display:grid;grid-template-columns:49px 58px 1fr 60px;padding:0 3px 0 2px;line-height:19px}
.qr b,.fl b{font-size:15px;color:#eee;white-space:nowrap}
.qr em,.qr i,.qr u,.qr s,.fl em,.fl i{font:bold 11.5px/19px "DejaVu Sans Mono","Noto Sans CJK SC",monospace;text-align:right;white-space:nowrap}
.qr b:nth-child(3){padding-left:6px}
.yi{font-size:14px;font-weight:normal}
.quote em{color:#ff3c3c}
.quote i{color:#00c800}
.quote .qr u{color:#c8c800}
.quote s{color:#e0e0e0}
.fl{height:19px;display:grid;grid-template-columns:108px 79px 1fr;padding:0 2px;line-height:19px}
.ticks{flex:none}
.tk{height:18px;display:grid;grid-template-columns:50px 56px 63px 16px 1fr;padding:0 2px;line-height:18px}
.tk s{color:#ddd}
.tk em{text-align:right}
.tk u{text-align:right;color:#c8c800}
.tk u.mg{color:#d000d0}
.tk i{font:bold 12px/18px "DejaVu Sans Mono",monospace;text-align:right;color:#00c800}
.tk tt{font:bold 11.5px/18px "DejaVu Sans Mono",monospace;text-align:right;color:#808080}

/* status */
.status{height:22px;flex:none;background:#ece9d8;color:#222;display:grid;grid-template-columns:19px 34px 73px 46px 56px 64px 35px 73px 45px 57px 65px 35px 68px 50px 58px 64px 3px 55px 50px 5px 222px 103px;align-items:center;line-height:22px;border-top:1px solid #fff}
.sicon{margin-left:3px}
.status .l{font-size:15px;color:#222}
.status b{color:#f00;font:bold 12.500px "DejaVu Sans Mono",monospace}
.status strong{color:#111;font:bold 12.500px/20px "DejaVu Sans Mono","Noto Sans CJK SC",monospace;white-space:nowrap}
.yi2{font:15px/20px "Noto Sans CJK SC",sans-serif}
.status .sp{border-left:1px solid #999;height:20px}
.srv{font-size:12px;color:#222}
.tray{display:flex;align-items:center;gap:5px}

/* overlays */
.wm{position:absolute;left:1058px;top:2px;width:221px;height:55px;background:linear-gradient(#f4f4f4,#fff 70%,#eee);padding:5px 0 0 4px;overflow:hidden}
.wm1{display:flex;align-items:center;height:26px}
.wmb{font:bold 20px "Noto Sans CJK SC",sans-serif;color:#0a28d8;width:67px}
.wmk{font:bold 17.500px "Noto Sans CJK SC",serif;color:#333;letter-spacing:.5px;white-space:nowrap}
.wm2{font:bold 22px/23px "Liberation Sans",sans-serif;color:#e83010;white-space:nowrap}
.redmark{position:absolute;left:448px;top:366px;font:bold 26px/32px "Liberation Sans","Noto Sans CJK SC",sans-serif;color:#dd0000;letter-spacing:.1px;white-space:nowrap;text-shadow:1px 1px 0 #800}
```
